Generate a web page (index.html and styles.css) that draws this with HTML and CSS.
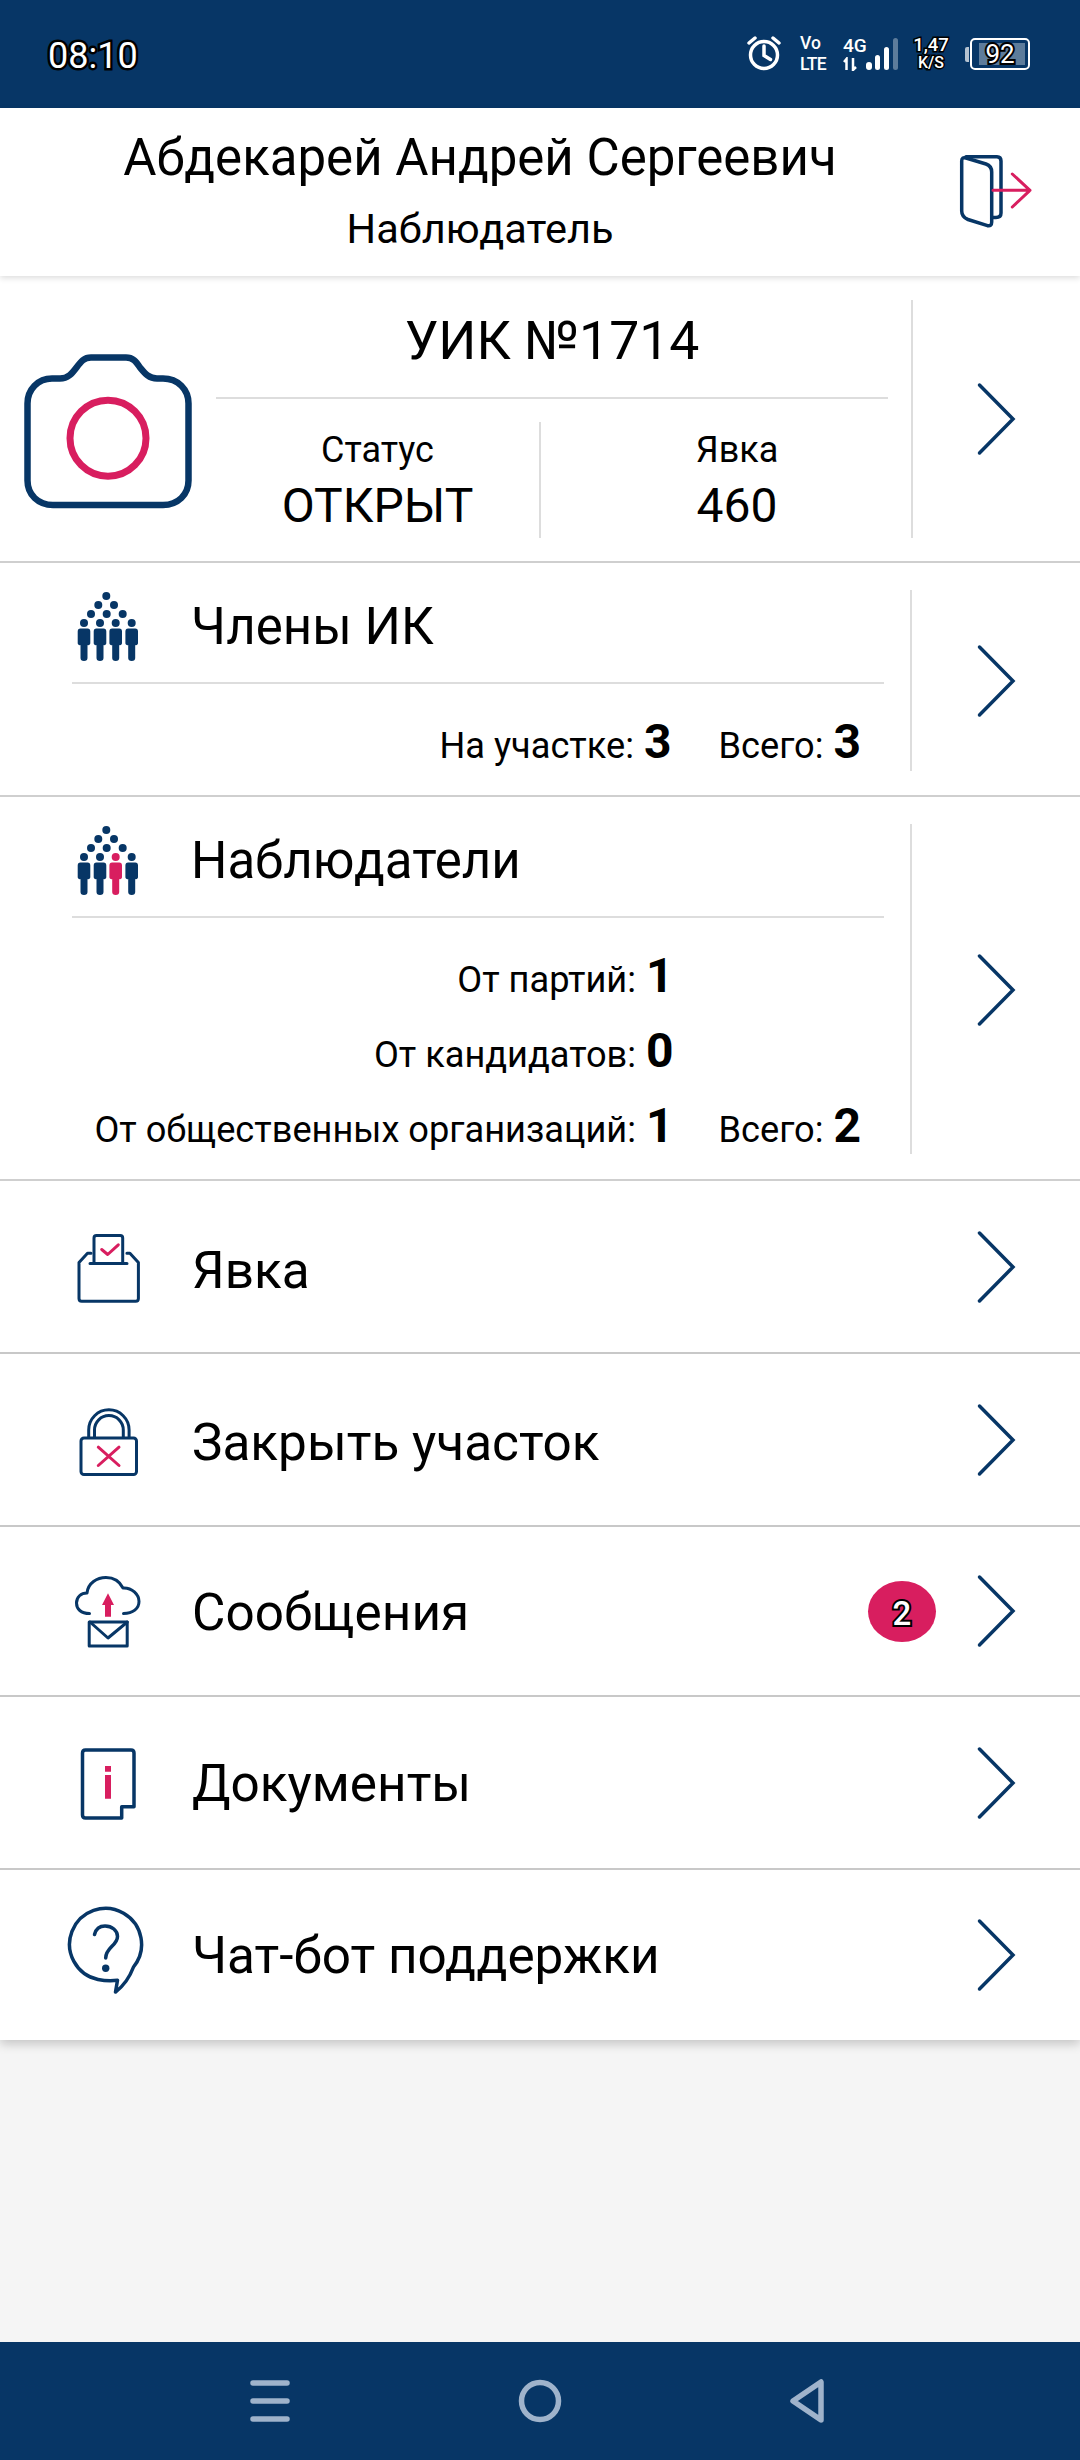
FILE: index.html
```html
<!DOCTYPE html>
<html lang="ru">
<head>
<meta charset="utf-8">
<title>УИК №1714</title>
<link rel="stylesheet" href="styles.css">
</head>
<body>
<div class="screen">
  <div class="statusbar">
    <span class="time">08:10</span>
    <div class="sys">
      <svg class="ic-alarm" viewBox="745 35 38 38"><circle cx="764" cy="55" r="13.5"/><path d="M764 46v9.5l6.500 4M749 43l6-5M779 43l-6-5"/></svg>
      <div class="volte"><span>Vo</span><span class="lte">LTE</span></div>
      <div class="net"><span>4G</span><svg class="ic-updown" viewBox="0 0 18 14"><path d="M3.500 13V2L1 5M10 1v12l3-3"/></svg></div>
      <svg class="ic-signal" viewBox="866 36 34 36"><rect x="866" y="62" width="6" height="8" rx="3"/><rect x="875" y="55" width="5" height="15" rx="2.500"/><rect x="884" y="47" width="5" height="23" rx="2.500"/><rect x="893" y="38" width="5" height="32" rx="2.500" class="dim"/></svg>
      <div class="speed"><span>1,47</span><span class="unit">K/S</span></div>
      <div class="battery"><span class="tip"></span><div class="cell"><span class="fill"></span><span class="pct">92</span></div></div>
    </div>
  </div>

  <header class="head">
    <div class="who">
      <div class="name">Абдекарей Андрей Сергеевич</div>
      <div class="role">Наблюдатель</div>
    </div>
    <svg class="ic-exit" viewBox="950 152 84 80"><path class="navy35" d="M966 156.700H997Q1001 156.700 1001 161V213Q1001 217.500 996 217.500H992"/><path class="navy35" d="M966 158L986 164Q991.700 166 991.700 172V222Q991.700 226.500 987.500 225.700L968 219.500Q961.700 217 961.700 211V161Q961.700 156.700 966 158Z"/><path class="pink" d="M993 190.300H1030M1012.300 174L1030 190.300 1012.300 207"/></svg>
  </header>

  <section class="list">
    <div class="panel panel-uik">
      <svg class="ic-camera" viewBox="20 318.500 175 200"><path class="navy" d="M52 378H60C68 378 72 373 76.500 367C81 361 84 357 91 357H126C133 357 136 361 140 367C145 373 149 378 157 378H163C178 378 188.500 389 188.500 403V480C188.500 494 178 504.500 163 504.500H53C38 504.500 27.500 494 27.500 480V403C27.500 389 38 378 52 378Z"/><circle class="pink" cx="108" cy="437.700" r="38"/></svg>
      <div class="uik-body">
        <div class="uik-title">УИК №1714</div>
        <div class="uik-stats">
          <div class="uik-stat"><span class="cap">Статус</span><span class="val">ОТКРЫТ</span></div>
          <div class="uik-stat uik-stat-r"><span class="cap">Явка</span><span class="val">460</span></div>
        </div>
      </div>
      <svg class="chev" viewBox="0 0 40 74"><path d="M3.500 3L37 37 3.500 71"/></svg>
    </div>

    <div class="panel panel-members">
      <div class="group">
        <div class="group-head">
          <svg class="ic-people" viewBox="75 590 66 76"><g class="navy-fill"><circle cx="106.300" cy="597" r="4"/><circle cx="98.300" cy="606" r="4"/><circle cx="114" cy="606" r="4"/><circle cx="91" cy="615" r="4"/><circle cx="106.700" cy="615" r="4"/><circle cx="122.700" cy="615" r="4"/><circle cx="84" cy="624" r="4"/><circle cx="100" cy="624" r="4"/><circle cx="115.700" cy="624" r="4"/><circle cx="131.700" cy="624" r="4"/><path d="M81 629.500h6a3 3 0 0 1 3.300 3V644a2 2 0 0 1-2.800 2v13a3.500 3 0 0 1-7 0v-13a2 2 0 0 1-2.800-2v-11.500a3 3 0 0 1 3.300-3zM97 629.500h6a3 3 0 0 1 3.300 3V644a2 2 0 0 1-2.800 2v13a3.500 3 0 0 1-7 0v-13a2 2 0 0 1-2.800-2v-11.500a3 3 0 0 1 3.300-3zM112.700 629.500h6a3 3 0 0 1 3.300 3V644a2 2 0 0 1-2.800 2v13a3.500 3 0 0 1-7 0v-13a2 2 0 0 1-2.800-2v-11.500a3 3 0 0 1 3.300-3zM128.700 629.500h6a3 3 0 0 1 3.300 3V644a2 2 0 0 1-2.800 2v13a3.500 3 0 0 1-7 0v-13a2 2 0 0 1-2.800-2v-11.500a3 3 0 0 1 3.300-3z"/></g></svg>
          <span class="group-title">Члены ИК</span>
        </div>
        <div class="counts">
          <div class="count"><span>На участке:</span> <b>3</b></div>
          <div class="count"><span>Всего:</span> <b>3</b></div>
        </div>
      </div>
      <svg class="chev chev-low" viewBox="0 0 40 74"><path d="M3.500 3L37 37 3.500 71"/></svg>
    </div>

    <div class="panel panel-observers">
      <div class="group">
        <div class="group-head">
          <svg class="ic-people" viewBox="75 590 66 76"><g class="navy-fill"><circle cx="106.300" cy="597" r="4"/><circle cx="98.300" cy="606" r="4"/><circle cx="114" cy="606" r="4"/><circle cx="91" cy="615" r="4"/><circle cx="106.700" cy="615" r="4"/><circle cx="122.700" cy="615" r="4"/><circle cx="84" cy="624" r="4"/><circle cx="100" cy="624" r="4"/><circle cx="131.700" cy="624" r="4"/><path d="M81 629.500h6a3 3 0 0 1 3.300 3V644a2 2 0 0 1-2.800 2v13a3.500 3 0 0 1-7 0v-13a2 2 0 0 1-2.800-2v-11.500a3 3 0 0 1 3.300-3zM97 629.500h6a3 3 0 0 1 3.300 3V644a2 2 0 0 1-2.800 2v13a3.500 3 0 0 1-7 0v-13a2 2 0 0 1-2.800-2v-11.500a3 3 0 0 1 3.300-3zM128.700 629.500h6a3 3 0 0 1 3.300 3V644a2 2 0 0 1-2.800 2v13a3.500 3 0 0 1-7 0v-13a2 2 0 0 1-2.800-2v-11.500a3 3 0 0 1 3.300-3z"/></g><g class="pink-fill"><circle cx="115.700" cy="624" r="4"/><path d="M112.700 629.500h6a3 3 0 0 1 3.300 3V644a2 2 0 0 1-2.800 2v13a3.500 3 0 0 1-7 0v-13a2 2 0 0 1-2.800-2v-11.500a3 3 0 0 1 3.300-3z"/></g></svg>
          <span class="group-title">Наблюдатели</span>
        </div>
        <div class="counts counts-grid">
          <div class="count"><span>От партий:</span> <b>1</b></div>
          <div class="count-spacer"></div>
          <div class="count"><span>От кандидатов:</span> <b>0</b></div>
          <div class="count-spacer"></div>
          <div class="count"><span>От общественных организаций:</span> <b>1</b></div>
          <div class="count"><span>Всего:</span> <b>2</b></div>
        </div>
      </div>
      <svg class="chev chev-low" viewBox="0 0 40 74"><path d="M3.500 3L37 37 3.500 71"/></svg>
    </div>

    <div class="row row-a">
      <svg class="ic" viewBox="60 1216.500 100 100"><path class="navy" d="M91 1252.700h-3.500L79 1262v36c0 1.700 1 2.700 2.700 2.700h54c1.700 0 2.700-1 2.700-2.700v-36l-8.500-9.300h-3"/><path class="navy" d="M94 1263v-25.500c0-1.500 1-2.500 2.500-2.500h23.700c1.500 0 2.500 1 2.500 2.500V1263M90 1263h37"/><path class="pink" d="M101.700 1249l6 5 10.600-9.700"/></svg>
      <span class="label">Явка</span>
      <svg class="chev" viewBox="0 0 40 74"><path d="M3.500 3L37 37 3.500 71"/></svg>
    </div>

    <div class="row row-b">
      <svg class="ic" viewBox="60 1389.500 100 100"><rect class="navy" x="81" y="1437.500" width="55.500" height="36.500" rx="3"/><path class="navy" d="M88.700 1437v-7.500a20.200 20.200 0 0 1 40.400 0v7.500M94.500 1437v-7.500a14.400 14.400 0 0 1 28.800 0v7.500"/><path class="pink" d="M98.300 1446.700l20.700 18.300M119 1446.700l-20.700 18.300"/></svg>
      <span class="label">Закрыть участок</span>
      <svg class="chev" viewBox="0 0 40 74"><path d="M3.500 3L37 37 3.500 71"/></svg>
    </div>

    <div class="row row-c">
      <svg class="ic" viewBox="60 1561 100 100"><path class="navy" d="M89.500 1613.500c-8.500 0-13-4.500-13-10.500s4.500-10 10.500-10c1-10 10-15.500 19-15.500 8 0 14 4.500 17 10.500 9-.5 16 6.500 16 13.500s-6 12-15.500 12"/><path class="pink-fill" d="M108 1593.300l6 11.700h-3v11.700h-6V1605h-3z"/><rect class="navy" x="89.200" y="1622" width="38" height="24"/><path class="navy" d="M90 1622l18 16 19.300-16"/></svg>
      <span class="label">Сообщения</span>
      <span class="badge">2</span>
      <svg class="chev chev-near" viewBox="0 0 40 74"><path d="M3.500 3L37 37 3.500 71"/></svg>
    </div>

    <div class="row row-d">
      <svg class="ic" viewBox="60 1733 100 100"><path class="navy3" d="M121.700 1818H85.500c-2 0-3-1-3-3v-62c0-2 1-3 3-3h45.500c2 0 3 1 3 3v53.700h-12.300z"/><path class="pink-fill" d="M105 1766h6v5.700h-6zM105 1775h6v23.700h-6z"/></svg>
      <span class="label">Документы</span>
      <svg class="chev" viewBox="0 0 40 74"><path d="M3.500 3L37 37 3.500 71"/></svg>
    </div>

    <div class="row row-e">
      <svg class="ic" viewBox="60 1905.500 100 100"><path class="navy3" d="M98 1980q10 2 19.500 .8l-2 11.700q12-9 18-25A36 36 0 1 0 98 1980z"/><path class="navy3" d="M94.500 1935c1.500-6 5.500-8.500 10.500-8.500 7 0 12.500 4.500 12.500 10.500 0 9-11.800 11-11.800 21.500"/><circle class="navy-fill" cx="105.700" cy="1968.700" r="3.700"/></svg>
      <span class="label">Чат-бот поддержки</span>
      <svg class="chev" viewBox="0 0 40 74"><path d="M3.500 3L37 37 3.500 71"/></svg>
    </div>
  </section>

  <div class="spacer"></div>

  <nav class="navbar">
    <svg class="nav-ic" viewBox="0 0 44 44"><path d="M3 4h34M3 22h34M3 40h34"/></svg>
    <svg class="nav-ic" viewBox="0 0 44 44"><circle cx="22" cy="22" r="18.500"/></svg>
    <svg class="nav-ic" viewBox="0 0 44 44"><path d="M35 3v38L7 22z"/></svg>
  </nav>
</div>
</body>
</html>
```

FILE: styles.css
```css
* { box-sizing: border-box; }
html, body { margin: 0; padding: 0; }
body { font-family: Roboto, "Noto Sans", sans-serif; color: #000; background: #f5f5f5; }
.screen { width: 1080px; height: 2460px; display: flex; flex-direction: column; overflow: hidden; }

/* status bar */
.statusbar { height: 108px; background: #073666; display: flex; align-items: center; justify-content: space-between; padding: 0 50px 0 48px; flex: none; }
.time { font-size: 36px; color: #fff; -webkit-text-stroke: 5px #000; paint-order: stroke fill; padding-top: 3px; }
.sys { display: flex; align-items: center; color: #fff; }
.ic-alarm { width: 38px; height: 38px; fill: none; stroke: #fff; stroke-width: 3.5; stroke-linecap: round; margin-right: 17px; }
.volte { display: flex; flex-direction: column; font-size: 17.5px; line-height: 21px; font-weight: 500; width: 43px; }
.lte { letter-spacing: -.6px; }
.net { display: flex; flex-direction: column; font-size: 19px; line-height: 18px; font-weight: 500; width: 23px; }
.ic-updown { width: 18px; height: 14px; fill: none; stroke: #fff; stroke-width: 2.5; margin-top: 2px; }
.ic-signal { width: 34px; height: 36px; fill: #fff; margin-right: 12px; }
.ic-signal .dim { opacity: .35; }
.speed { display: flex; flex-direction: column; align-items: center; font-size: 18.5px; line-height: 17px; font-weight: 500; width: 38px; -webkit-text-stroke: 3px #000; paint-order: stroke fill; }
.unit { font-size: 16px; }
.battery { display: flex; align-items: center; margin-left: 15px; }
.tip { width: 4px; height: 15px; background: #fff; opacity: .7; border-radius: 2px 0 0 2px; margin-right: 1px; }
.cell { width: 60px; height: 32px; border: 2.5px solid #fff; border-radius: 5px; position: relative; display: flex; align-items: center; justify-content: center; }
.fill { position: absolute; left: 7px; right: 3px; top: 3px; bottom: 3px; background: rgba(255,255,255,.35); }
.pct { position: relative; font-size: 26px; line-height: 26px; color: #fff; -webkit-text-stroke: 4px #000; paint-order: stroke fill; }

/* header */
.head { height: 168px; background: #fff; display: flex; align-items: center; box-shadow: 0 2px 6px rgba(0,0,0,.14); position: relative; flex: none; }
.who { width: 960px; margin-right: -10px; padding-bottom: 4px; text-align: center; flex: none; }
.name { font-size: 51px; line-height: 62px; }
.role { font-size: 41.5px; line-height: 50px; margin-top: 15px; }
.ic-exit { width: 84px; height: 80px; fill: none; flex: none; }

/* icon paint */
.navy { fill: none; stroke: #073666; stroke-width: 3; stroke-linecap: round; stroke-linejoin: round; }
.navy3, .navy35 { fill: none; stroke: #073666; stroke-width: 3.5; stroke-linejoin: round; stroke-linecap: round; }
.pink { fill: none; stroke: #d81e5f; stroke-width: 3; stroke-linecap: round; stroke-linejoin: round; }
.navy-fill { fill: #073666; }
.pink-fill { fill: #d81e5f; }

/* list */
.list { background: #fff; display: flex; flex-direction: column; box-shadow: 0 4px 10px rgba(0,0,0,.2); flex: none; }
.panel { display: flex; align-items: center; border-bottom: 2px solid #cfcfcf; position: relative; }
.row { display: flex; align-items: center; border-bottom: 2px solid #c8c8c8; }
.row:last-child { border-bottom: 0; }
.row-a { height: 173px; }
.row-b { height: 173px; }
.row-c { height: 170px; }
.row-d { height: 173px; }
.row-e { height: 170px; }
.row-a .label { margin-top: 8px; }
.row-b .label { margin-top: 5px; }
.row-c .label, .row-d .label { margin-top: 2px; }
.chev { width: 40px; height: 74px; fill: none; stroke: #073666; stroke-width: 3.5; stroke-linecap: round; stroke-linejoin: miter; margin-left: auto; margin-right: 64px; flex: none; }
.chev-low { margin-top: 4px; }
.chev-near { margin-left: 40px; }

.panel-uik { height: 287px; }
.ic-camera { width: 175px; height: 200px; margin-left: 20px; flex: none; }
.ic-camera .navy { stroke-width: 6.5; }
.ic-camera .pink { stroke-width: 7; }
.uik-body { width: 718px; height: 238px; border-right: 2px solid #ddd; padding-left: 21px; flex: none; }
.uik-title { font-size: 53.5px; line-height: 82px; height: 99px; margin-right: 23px; text-align: center; border-bottom: 2px solid #ddd; }
.uik-stats { display: grid; grid-template-columns: 323px 347px; margin-top: 23px; height: 116px; }
.uik-stat { display: flex; flex-direction: column; align-items: center; }
.uik-stat-r { border-left: 2px solid #ddd; padding-left: 47px; }
.cap { font-size: 36px; line-height: 40px; margin-top: 8px; }
.val { font-size: 48px; line-height: 58px; margin-top: 7px; }

.panel-members { height: 234px; }
.panel-observers { height: 384px; }
.group { width: 912px; height: 181px; margin-top: 2px; padding: 0 26px 0 72px; border-right: 2px solid #ddd; flex: none; }
.panel-observers .group { height: 330px; }
.group-head { display: flex; align-items: center; height: 94px; padding-bottom: 18px; border-bottom: 2px solid #ddd; }
.ic-people { width: 66px; height: 76px; margin-left: 3px; flex: none; }
.group-title { font-size: 51px; margin-left: 50px; }
.panel-observers .group-title { margin-top: -2px; }
.counts { display: grid; grid-template-columns: 1fr auto; column-gap: 47px; padding-right: 23px; margin-top: 30px; }
.counts-grid { row-gap: 15px; column-gap: 45px; margin-top: 30px; }
.count { text-align: right; font-size: 36.2px; line-height: 56px; white-space: nowrap; }
.count b { font-size: 48px; font-weight: 700; margin-left: 1px; }
.label { font-size: 51.3px; margin-left: 32px; }
.ic { width: 100px; height: 100px; margin-left: 60px; flex: none; }
.badge { margin-left: auto; width: 68px; height: 61px; padding-top: 4px; border-radius: 50%; background: #d81e5f; color: #fff; font-size: 33px; font-weight: 500; display: flex; align-items: center; justify-content: center; -webkit-text-stroke: 4px #000; paint-order: stroke fill; flex: none; }

.spacer { flex: 1; }
.navbar { height: 118px; background: #073666; display: flex; justify-content: center; align-items: center; gap: 224px; flex: none; }
.nav-ic { width: 44px; height: 44px; fill: none; stroke: #9fb3cb; stroke-width: 5.5; stroke-linecap: round; stroke-linejoin: round; }
```
